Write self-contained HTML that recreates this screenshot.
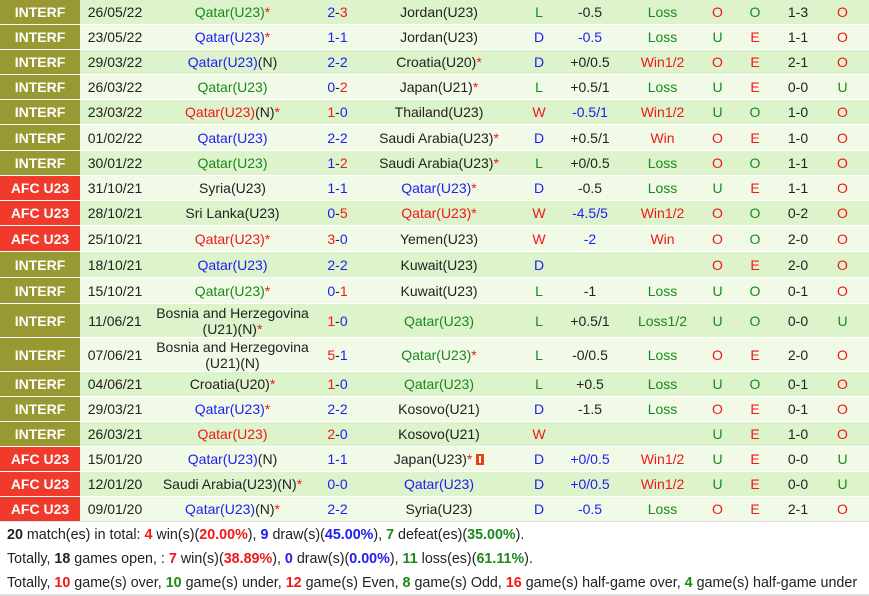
<!DOCTYPE html>
<html><head><meta charset="utf-8"><style>
body{margin:0;width:869px;height:596px;background:#fff;font-family:"Liberation Sans",Arial,sans-serif;font-size:14px;overflow:hidden;position:relative}
.r{position:absolute;left:0;width:869px;display:flex;color:#222}
.r>div{display:flex;align-items:center;justify-content:center;text-align:center;line-height:16px;white-space:nowrap}
.a{background:#dcf3cb}.b{background:#f0fae7}
.c1{width:80px;color:#fff;font-weight:bold;background:#999933}
.af .c1{background:#f03a2c}
.c2{width:70px}.c3{width:165px}.c4{width:45px}.c5{width:158px}.c6{width:42px}.c7{width:60px}.c8{width:85px}.c9{width:25px}.c10{width:50px}.c11{width:36px}.c12{width:53px}
.g{color:#1a8a1a}.u{color:#1e1ef0}.d{color:#f01818}.k{color:#222}
.s{position:absolute;left:0;width:862px;padding-left:7px;height:24px;line-height:24px;color:#222;font-size:14.3px;white-space:nowrap}
.s b.d{color:#f01818}.s b.u{color:#1e1ef0}.s b.g{color:#1a8a1a}
</style></head><body>
<div class="r a" style="top:0;height:24px"><div class="c1">INTERF</div><div class="c2">26/05/22</div><div class="c3 g"><span>Qatar(U23)<span class="d">*</span></span></div><div class="c4"><span><span class="u">2</span>-<span class="d">3</span></span></div><div class="c5">Jordan(U23)</div><div class="c6 g">L</div><div class="c7">-0.5</div><div class="c8 g">Loss</div><div class="c9 d">O</div><div class="c10 g">O</div><div class="c11">1-3</div><div class="c12 d">O</div></div>
<div class="r b" style="top:25px;height:24px"><div class="c1">INTERF</div><div class="c2">23/05/22</div><div class="c3 u"><span>Qatar(U23)<span class="d">*</span></span></div><div class="c4 u">1-1</div><div class="c5">Jordan(U23)</div><div class="c6 u">D</div><div class="c7 u">-0.5</div><div class="c8 g">Loss</div><div class="c9 g">U</div><div class="c10 d">E</div><div class="c11">1-1</div><div class="c12 d">O</div></div>
<div class="r a" style="top:50px;height:24px"><div class="c1">INTERF</div><div class="c2">29/03/22</div><div class="c3"><span><span class="u">Qatar(U23)</span>(N)</span></div><div class="c4 u">2-2</div><div class="c5"><span>Croatia(U20)<span class="d">*</span></span></div><div class="c6 u">D</div><div class="c7">+0/0.5</div><div class="c8 d">Win1/2</div><div class="c9 d">O</div><div class="c10 d">E</div><div class="c11">2-1</div><div class="c12 d">O</div></div>
<div class="r b" style="top:75px;height:24px"><div class="c1">INTERF</div><div class="c2">26/03/22</div><div class="c3 g">Qatar(U23)</div><div class="c4"><span><span class="u">0</span>-<span class="d">2</span></span></div><div class="c5"><span>Japan(U21)<span class="d">*</span></span></div><div class="c6 g">L</div><div class="c7">+0.5/1</div><div class="c8 g">Loss</div><div class="c9 g">U</div><div class="c10 d">E</div><div class="c11">0-0</div><div class="c12 g">U</div></div>
<div class="r a" style="top:100px;height:24px"><div class="c1">INTERF</div><div class="c2">23/03/22</div><div class="c3"><span><span class="d">Qatar(U23)</span>(N)<span class="d">*</span></span></div><div class="c4"><span><span class="d">1</span>-<span class="u">0</span></span></div><div class="c5">Thailand(U23)</div><div class="c6 d">W</div><div class="c7 u">-0.5/1</div><div class="c8 d">Win1/2</div><div class="c9 g">U</div><div class="c10 g">O</div><div class="c11">1-0</div><div class="c12 d">O</div></div>
<div class="r b" style="top:125px;height:25px"><div class="c1">INTERF</div><div class="c2">01/02/22</div><div class="c3 u">Qatar(U23)</div><div class="c4 u">2-2</div><div class="c5"><span>Saudi Arabia(U23)<span class="d">*</span></span></div><div class="c6 u">D</div><div class="c7">+0.5/1</div><div class="c8 d">Win</div><div class="c9 d">O</div><div class="c10 d">E</div><div class="c11">1-0</div><div class="c12 d">O</div></div>
<div class="r a" style="top:151px;height:24px"><div class="c1">INTERF</div><div class="c2">30/01/22</div><div class="c3 g">Qatar(U23)</div><div class="c4"><span><span class="u">1</span>-<span class="d">2</span></span></div><div class="c5"><span>Saudi Arabia(U23)<span class="d">*</span></span></div><div class="c6 g">L</div><div class="c7">+0/0.5</div><div class="c8 g">Loss</div><div class="c9 d">O</div><div class="c10 g">O</div><div class="c11">1-1</div><div class="c12 d">O</div></div>
<div class="r b af" style="top:176px;height:24px"><div class="c1">AFC U23</div><div class="c2">31/10/21</div><div class="c3">Syria(U23)</div><div class="c4 u">1-1</div><div class="c5 u"><span>Qatar(U23)<span class="d">*</span></span></div><div class="c6 u">D</div><div class="c7">-0.5</div><div class="c8 g">Loss</div><div class="c9 g">U</div><div class="c10 d">E</div><div class="c11">1-1</div><div class="c12 d">O</div></div>
<div class="r a af" style="top:201px;height:24px"><div class="c1">AFC U23</div><div class="c2">28/10/21</div><div class="c3">Sri Lanka(U23)</div><div class="c4"><span><span class="u">0</span>-<span class="d">5</span></span></div><div class="c5 d">Qatar(U23)*</div><div class="c6 d">W</div><div class="c7 u">-4.5/5</div><div class="c8 d">Win1/2</div><div class="c9 d">O</div><div class="c10 g">O</div><div class="c11">0-2</div><div class="c12 d">O</div></div>
<div class="r b af" style="top:226px;height:25px"><div class="c1">AFC U23</div><div class="c2">25/10/21</div><div class="c3 d">Qatar(U23)*</div><div class="c4"><span><span class="d">3</span>-<span class="u">0</span></span></div><div class="c5">Yemen(U23)</div><div class="c6 d">W</div><div class="c7 u">-2</div><div class="c8 d">Win</div><div class="c9 d">O</div><div class="c10 g">O</div><div class="c11">2-0</div><div class="c12 d">O</div></div>
<div class="r a" style="top:252px;height:25px"><div class="c1">INTERF</div><div class="c2">18/10/21</div><div class="c3 u">Qatar(U23)</div><div class="c4 u">2-2</div><div class="c5">Kuwait(U23)</div><div class="c6 u">D</div><div class="c7"></div><div class="c8"></div><div class="c9 d">O</div><div class="c10 d">E</div><div class="c11">2-0</div><div class="c12 d">O</div></div>
<div class="r b" style="top:278px;height:25px"><div class="c1">INTERF</div><div class="c2">15/10/21</div><div class="c3 g"><span>Qatar(U23)<span class="d">*</span></span></div><div class="c4"><span><span class="u">0</span>-<span class="d">1</span></span></div><div class="c5">Kuwait(U23)</div><div class="c6 g">L</div><div class="c7">-1</div><div class="c8 g">Loss</div><div class="c9 g">U</div><div class="c10 g">O</div><div class="c11">0-1</div><div class="c12 d">O</div></div>
<div class="r a" style="top:304px;height:33px"><div class="c1">INTERF</div><div class="c2">11/06/21</div><div class="c3"><span>Bosnia and Herzegovina<br>(U21)(N)<span class="d">*</span></span></div><div class="c4"><span><span class="d">1</span>-<span class="u">0</span></span></div><div class="c5 g">Qatar(U23)</div><div class="c6 g">L</div><div class="c7">+0.5/1</div><div class="c8 g">Loss1/2</div><div class="c9 g">U</div><div class="c10 g">O</div><div class="c11">0-0</div><div class="c12 g">U</div></div>
<div class="r b" style="top:338px;height:33px"><div class="c1">INTERF</div><div class="c2">07/06/21</div><div class="c3"><span>Bosnia and Herzegovina<br>(U21)(N)</span></div><div class="c4"><span><span class="d">5</span>-<span class="u">1</span></span></div><div class="c5 g"><span>Qatar(U23)<span class="d">*</span></span></div><div class="c6 g">L</div><div class="c7">-0/0.5</div><div class="c8 g">Loss</div><div class="c9 d">O</div><div class="c10 d">E</div><div class="c11">2-0</div><div class="c12 d">O</div></div>
<div class="r a" style="top:372px;height:24px"><div class="c1">INTERF</div><div class="c2">04/06/21</div><div class="c3"><span>Croatia(U20)<span class="d">*</span></span></div><div class="c4"><span><span class="d">1</span>-<span class="u">0</span></span></div><div class="c5 g">Qatar(U23)</div><div class="c6 g">L</div><div class="c7">+0.5</div><div class="c8 g">Loss</div><div class="c9 g">U</div><div class="c10 g">O</div><div class="c11">0-1</div><div class="c12 d">O</div></div>
<div class="r b" style="top:397px;height:24px"><div class="c1">INTERF</div><div class="c2">29/03/21</div><div class="c3 u"><span>Qatar(U23)<span class="d">*</span></span></div><div class="c4 u">2-2</div><div class="c5">Kosovo(U21)</div><div class="c6 u">D</div><div class="c7">-1.5</div><div class="c8 g">Loss</div><div class="c9 d">O</div><div class="c10 d">E</div><div class="c11">0-1</div><div class="c12 d">O</div></div>
<div class="r a" style="top:422px;height:24px"><div class="c1">INTERF</div><div class="c2">26/03/21</div><div class="c3 d">Qatar(U23)</div><div class="c4"><span><span class="d">2</span>-<span class="u">0</span></span></div><div class="c5">Kosovo(U21)</div><div class="c6 d">W</div><div class="c7"></div><div class="c8"></div><div class="c9 g">U</div><div class="c10 d">E</div><div class="c11">1-0</div><div class="c12 d">O</div></div>
<div class="r b af" style="top:447px;height:24px"><div class="c1">AFC U23</div><div class="c2">15/01/20</div><div class="c3"><span><span class="u">Qatar(U23)</span>(N)</span></div><div class="c4 u">1-1</div><div class="c5"><span>Japan(U23)<span class="d">*</span>&nbsp;<span style="display:inline-block;width:8px;height:11px;background:#e84010;position:relative;vertical-align:-1px"><span style="position:absolute;left:3px;top:2px;width:2px;height:7px;background:#fff"></span></span></span></div><div class="c6 u">D</div><div class="c7 u">+0/0.5</div><div class="c8 d">Win1/2</div><div class="c9 g">U</div><div class="c10 d">E</div><div class="c11">0-0</div><div class="c12 g">U</div></div>
<div class="r a af" style="top:472px;height:24px"><div class="c1">AFC U23</div><div class="c2">12/01/20</div><div class="c3"><span>Saudi Arabia(U23)(N)<span class="d">*</span></span></div><div class="c4 u">0-0</div><div class="c5 u">Qatar(U23)</div><div class="c6 u">D</div><div class="c7 u">+0/0.5</div><div class="c8 d">Win1/2</div><div class="c9 g">U</div><div class="c10 d">E</div><div class="c11">0-0</div><div class="c12 g">U</div></div>
<div class="r b af" style="top:497px;height:24px"><div class="c1">AFC U23</div><div class="c2">09/01/20</div><div class="c3"><span><span class="u">Qatar(U23)</span>(N)<span class="d">*</span></span></div><div class="c4 u">2-2</div><div class="c5">Syria(U23)</div><div class="c6 u">D</div><div class="c7 u">-0.5</div><div class="c8 g">Loss</div><div class="c9 d">O</div><div class="c10 d">E</div><div class="c11">2-1</div><div class="c12 d">O</div></div>
<div style="position:absolute;left:0;top:521px;width:869px;height:1px;background:#e0e0e0"></div>
<div class="s" style="top:523px"><b>20</b> match(es) in total: <b class="d">4</b> win(s)(<b class="d">20.00%</b>), <b class="u">9</b> draw(s)(<b class="u">45.00%</b>), <b class="g">7</b> defeat(es)(<b class="g">35.00%</b>).</div>
<div class="s" style="top:547px">Totally, <b>18</b> games open, : <b class="d">7</b> win(s)(<b class="d">38.89%</b>), <b class="u">0</b> draw(s)(<b class="u">0.00%</b>), <b class="g">11</b> loss(es)(<b class="g">61.11%</b>).</div>
<div class="s" style="top:571px">Totally, <b class="d">10</b> game(s) over, <b class="g">10</b> game(s) under, <b class="d">12</b> game(s) Even, <b class="g">8</b> game(s) Odd, <b class="d">16</b> game(s) half-game over, <b class="g">4</b> game(s) half-game under</div>
<div style="position:absolute;left:0;top:594px;width:869px;height:2px;background:#e0e0e0"></div>
</body></html>
